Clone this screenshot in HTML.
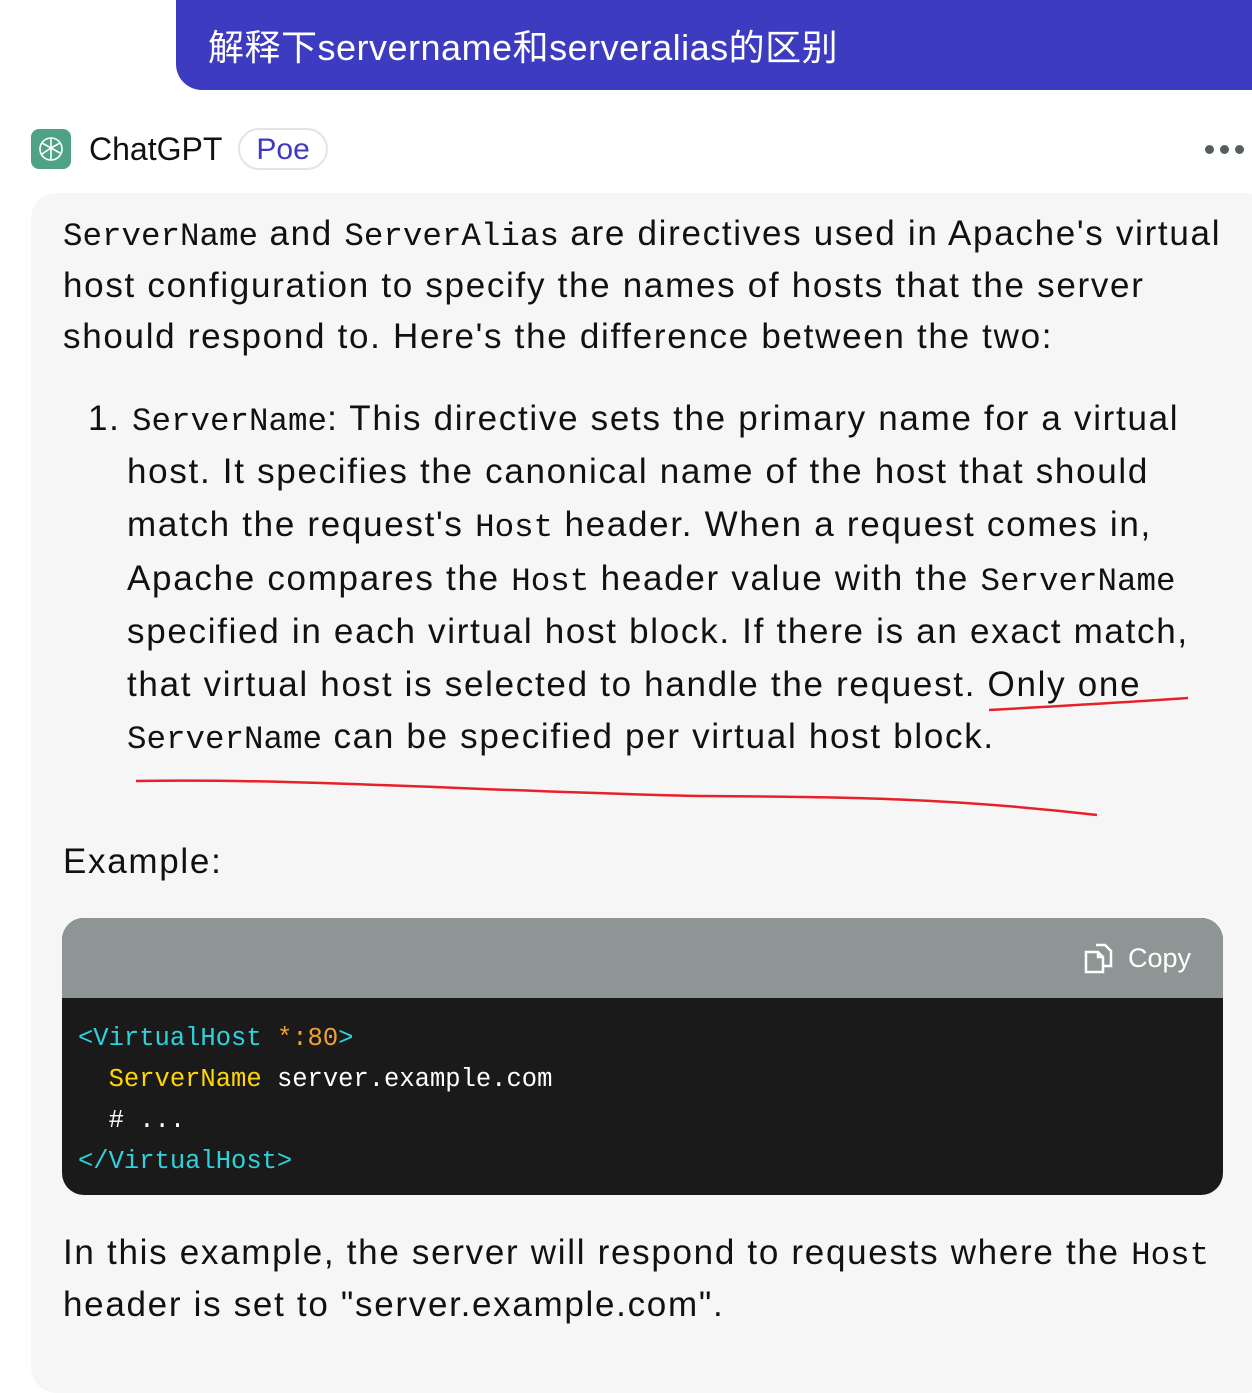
<!DOCTYPE html>
<html><head><meta charset="utf-8"><style>
*{margin:0;padding:0;box-sizing:border-box}
body{width:1252px;height:1343px;background:#fff;font-family:"Liberation Sans","Noto Sans CJK SC",sans-serif;color:#111;position:relative;overflow:hidden}
.q{position:absolute;left:176px;top:0;width:1100px;height:90px;background:#3d3bbf;border-radius:0 0 0 26px;color:#fff;font-size:36px;padding:28px 0 0 32px;line-height:40px;letter-spacing:0.5px}
.hdr{position:absolute;top:128px;left:31px;height:42px;display:flex;align-items:center}
.logo{width:40px;height:40px;background:#4fa283;border-radius:8px;display:flex;align-items:center;justify-content:center}
.name{font-size:32px;margin-left:18px}
.poe{margin-left:16px;border:2px solid #e2e5e5;border-radius:22px;color:#3d3bbf;font-size:30px;padding:2px 16px;height:42px;line-height:36px}
.dots{position:absolute;left:1205px;top:145px;display:flex;gap:6px}
.dots i{width:9px;height:9px;border-radius:50%;background:#555d5d;display:block}
.card{position:absolute;left:31px;top:193px;width:1240px;height:1200px;background:#f6f6f6;border-radius:26px}
.l{position:absolute;white-space:nowrap;font-size:35px;line-height:40px;letter-spacing:1.7px}
code{font-family:"Liberation Mono",monospace;font-size:32.5px;letter-spacing:0}
.cb{position:absolute;left:62px;top:918px;width:1161px;height:277px;border-radius:22px;overflow:hidden;background:#1a1a1a}
.ch{height:80px;background:#8e9695;position:relative}
.copy{position:absolute;right:32px;top:24px;color:#fff;font-size:27px;display:flex;align-items:center;gap:14px}
.code{font-family:"Liberation Mono",monospace;font-size:25.5px;line-height:41px;color:#fff;padding:20px 0 0 16px;white-space:pre}
.c{color:#2fd2db}.y{color:#ffd700}.o{color:#f0a030}
</style></head><body>
<div class="q">解释下servername和serveralias的区别</div>
<div class="hdr"><div class="logo"><svg width="30" height="30" viewBox="0 0 30 30" fill="none" stroke="#fff" stroke-width="1.6"><circle cx="15" cy="15" r="11"/><path d="M15 4v10l9 5M24 9l-9 5-9-5M6 20l9-6v11"/></svg></div><span class="name">ChatGPT</span><span class="poe">Poe</span></div>
<div class="dots"><i></i><i></i><i></i></div>
<div class="card"></div>
<div class="l" style="left:63px;top:214px"><code>ServerName</code> and <code>ServerAlias</code> are directives used in Apache's virtual</div>
<div class="l" style="left:63px;top:266px">host configuration to specify the names of hosts that the server</div>
<div class="l" style="left:63px;top:317px">should respond to. Here's the difference between the two:</div>
<div class="l" style="left:88px;top:399px">1. <code>ServerName</code>: This directive sets the primary name for a virtual</div>
<div class="l" style="left:127px;top:452px">host. It specifies the canonical name of the host that should</div>
<div class="l" style="left:127px;top:505px">match the request's <code>Host</code> header. When a request comes in,</div>
<div class="l" style="left:127px;top:559px">Apache compares the <code>Host</code> header value with the <code>ServerName</code></div>
<div class="l" style="left:127px;top:612px">specified in each virtual host block. If there is an exact match,</div>
<div class="l" style="left:127px;top:665px">that virtual host is selected to handle the request. Only one</div>
<div class="l" style="left:127px;top:717px"><code>ServerName</code> can be specified per virtual host block.</div>
<svg style="position:absolute;left:0;top:0" width="1252" height="900"><path d="M989 710 Q1100 704 1188 698" stroke="#e8202a" stroke-width="2.5" fill="none"/><path d="M136 781 C300 778 500 792 700 796 C850 797 950 798 1097 815" stroke="#e8202a" stroke-width="2.5" fill="none"/></svg>
<div class="l" style="left:63px;top:842px">Example:</div>
<div class="cb"><div class="ch"><div class="copy"><svg width="30" height="32" viewBox="0 0 30 32" fill="none" stroke="#fff" stroke-width="2.5"><path d="M2 10h12l5 5v15H2z M14 10v5h5"/><path d="M12 3h9l6 6v15h-7"/></svg>Copy</div></div>
<div class="code"><span class="c">&lt;VirtualHost </span><span class="o">*:80</span><span class="c">&gt;</span>
  <span class="y">ServerName</span> server.example.com
  # ...
<span class="c">&lt;/VirtualHost&gt;</span></div></div>
<div class="l" style="left:63px;top:1233px">In this example, the server will respond to requests where the <code>Host</code></div>
<div class="l" style="left:63px;top:1285px">header is set to "server.example.com".</div>
</body></html>
